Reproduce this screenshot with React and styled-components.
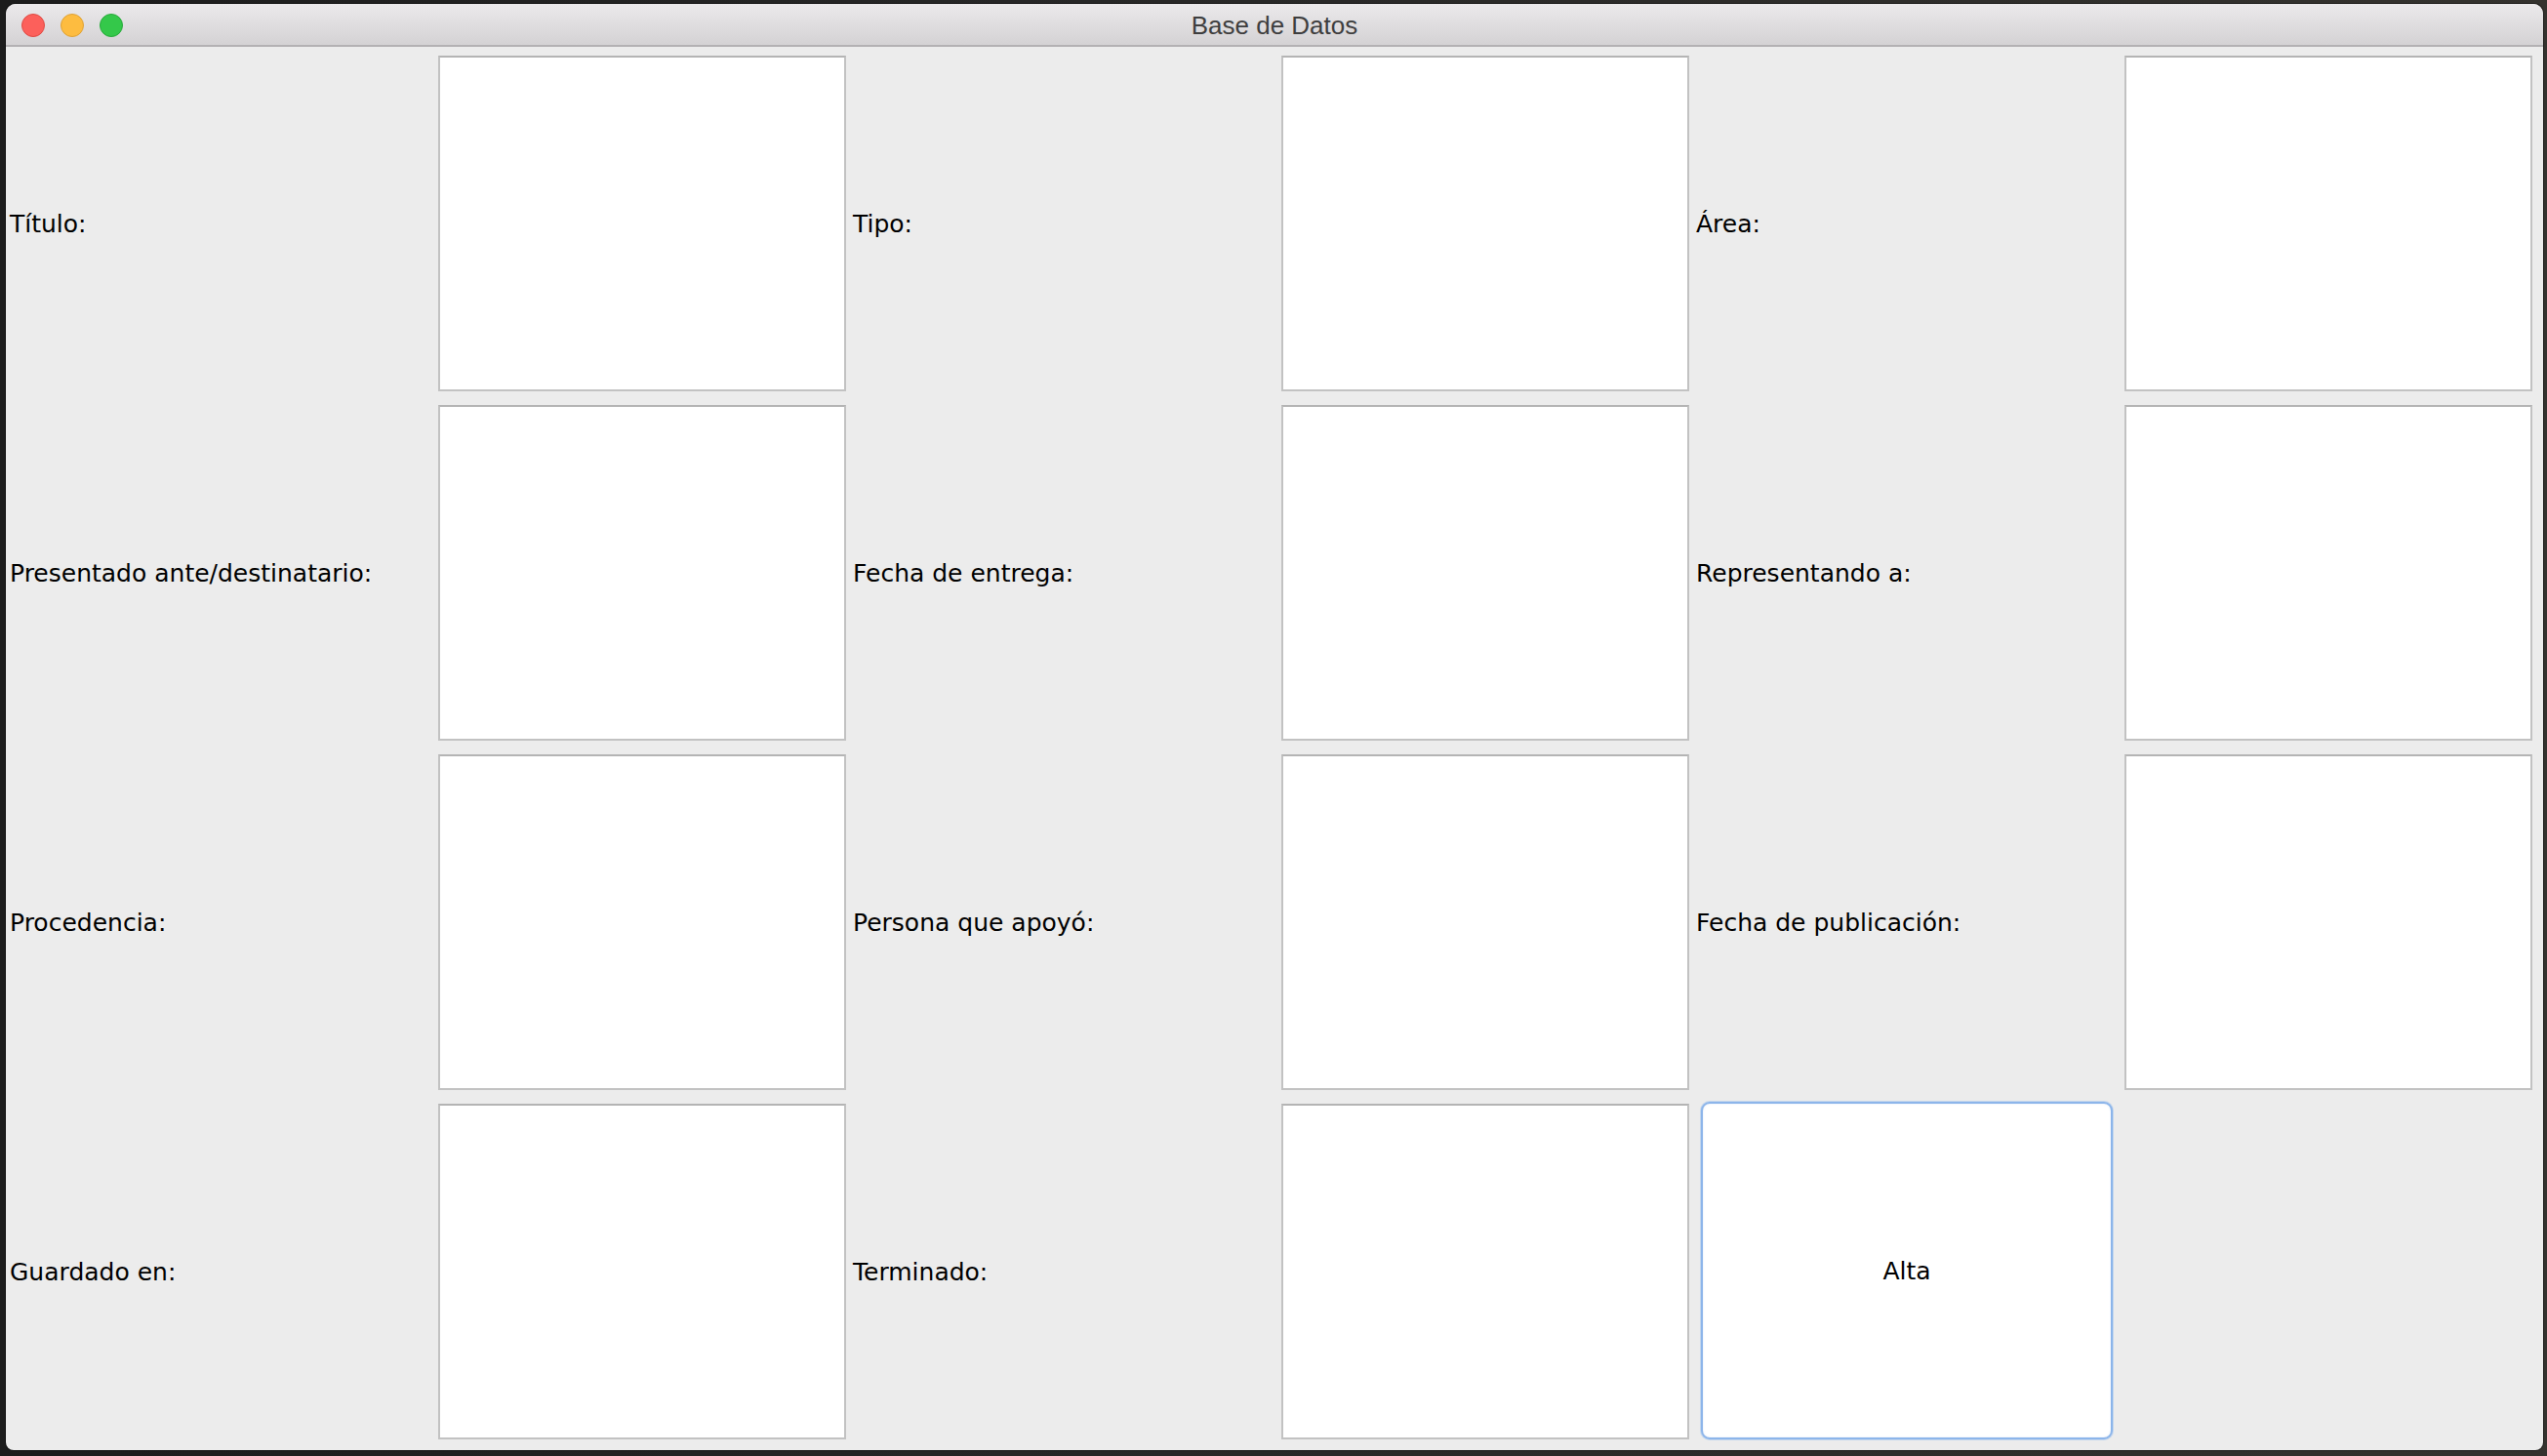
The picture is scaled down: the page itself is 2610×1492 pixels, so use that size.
import React from "react";
import styled, { createGlobalStyle } from "styled-components";

const Global = createGlobalStyle`
  html, body {
    margin: 0;
    padding: 0;
    background: #232323;
    width: 2610px;
    height: 1492px;
    overflow: hidden;
  }
  * { box-sizing: border-box; }
`;

const Desktop = styled.div`
  width: 2610px;
  height: 1492px;
  padding: 4px 4px 6px 6px;
  background: linear-gradient(90deg, #1c1c1c 0%, #262626 40%, #34322e 100%);
`;

const Window = styled.div`
  width: 2600px;
  height: 1482px;
  display: flex;
  flex-direction: column;
  background: #ececec;
  border-radius: 10px 10px 8px 8px;
  overflow: hidden;
  box-shadow: 0 0 0 1px rgba(0, 0, 0, 0.45);
`;

const TitleBar = styled.div`
  position: relative;
  height: 44px;
  flex: 0 0 44px;
  display: flex;
  align-items: center;
  justify-content: center;
  background: linear-gradient(180deg, #ebe9eb 0%, #d4d2d4 100%);
  border-bottom: 2px solid #b3b1b3;
`;

const Lights = styled.div`
  position: absolute;
  left: 16px;
  top: 10px;
  display: flex;
  gap: 16px;
`;

const Light = styled.span`
  width: 24px;
  height: 24px;
  border-radius: 50%;
  background: ${(p) => p.$fill};
  border: 1px solid ${(p) => p.$edge};
`;

const Title = styled.span`
  font-family: "Liberation Sans", Arial, sans-serif;
  font-size: 26px;
  color: #3e3e3e;
  margin-top: 3px;
`;

const Form = styled.div`
  flex: 1;
  display: grid;
  grid-template-columns: 432px 418px 432px 418px 432px 418px;
  grid-template-rows: repeat(4, 344px);
  column-gap: 7px;
  row-gap: 14px;
  padding: 9px 11px 11px 4px;
`;

const Label = styled.div`
  display: flex;
  align-items: center;
  font-family: "DejaVu Sans", "Noto Sans", sans-serif;
  font-size: 25px;
  color: #000;
  white-space: nowrap;
`;

const Field = styled.div`
  background: #fff;
  border: 2px solid #c2c2c2;
  border-top-color: #b4b4b4;
`;

const Button = styled.button`
  margin: -2px 5px 0 5px;
  background: #fff;
  border: 2px solid #8cb5ea;
  border-radius: 9px;
  box-shadow: 0 0 0 1px rgba(150, 190, 240, 0.45), inset 0 0 2px rgba(140, 180, 235, 0.35);
  font-family: "DejaVu Sans", "Noto Sans", sans-serif;
  font-size: 25px;
  color: #000;
  padding: 0;
  cursor: default;
`;

const rows = [
  ["Título:", "Tipo:", "Área:"],
  ["Presentado ante/destinatario:", "Fecha de entrega:", "Representando a:"],
  ["Procedencia:", "Persona que apoyó:", "Fecha de publicación:"],
];

export default function App() {
  return (
    <>
      <Global />
      <Desktop>
        <Window>
          <TitleBar>
            <Lights>
              <Light $fill="#fc605b" $edge="#de4a43" />
              <Light $fill="#fdbc40" $edge="#dea135" />
              <Light $fill="#34c84a" $edge="#27a93a" />
            </Lights>
            <Title>Base de Datos</Title>
          </TitleBar>
          <Form>
            {rows.map((r) =>
              r.map((label) => (
                <React.Fragment key={label}>
                  <Label>{label}</Label>
                  <Field />
                </React.Fragment>
              ))
            )}
            <Label>Guardado en:</Label>
            <Field />
            <Label>Terminado:</Label>
            <Field />
            <Button>Alta</Button>
            <div />
          </Form>
        </Window>
      </Desktop>
    </>
  );
}
